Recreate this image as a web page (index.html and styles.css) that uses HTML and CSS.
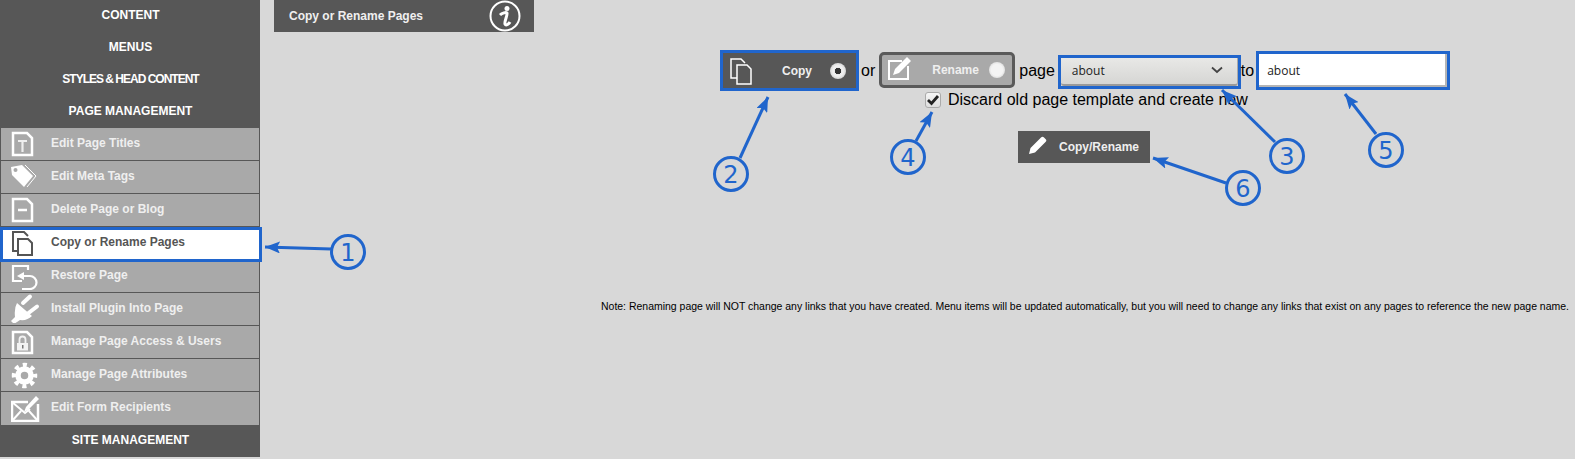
FILE: index.html
```html
<!DOCTYPE html>
<html lang="en">
<head>
<meta charset="UTF-8" />
<title>Copy or Rename Pages</title>
<link rel="stylesheet" href="styles.css">
</head>
<body>

<div class="layout">
  <aside class="sidebar">
    <a class="top-item">CONTENT</a>
    <a class="top-item">MENUS</a>
    <a class="top-item tight">STYLES &amp; HEAD CONTENT</a>
    <a class="top-item">PAGE MANAGEMENT</a>

    <ul class="sub-menu">
      <li class="sub-item">
        <svg class="icon" viewBox="0 0 30 30"><path d="M2 5h14l5 5v17H2z" fill="none" stroke="#fff" stroke-width="2.500"/><path d="M7 13h9M11.500 13v11" fill="none" stroke="#eee" stroke-width="2.200"/></svg>
        Edit Page Titles
      </li>
      <li class="sub-item">
        <svg class="icon" viewBox="0 0 30 30"><path d="M0 6 11 4l11 11-9 11L1 14z" fill="#fff"/><path d="M14 4l11 11-9 11" fill="none" stroke="#fff"/><circle cx="4.500" cy="9" r="2" fill="#a9a9a9"/></svg>
        Edit Meta Tags
      </li>
      <li class="sub-item">
        <svg class="icon" viewBox="0 0 30 30"><path d="M2 5h14l5 5v17H2z" fill="none" stroke="#fff" stroke-width="2.500"/><path d="M7 16h9" fill="none" stroke="#fff" stroke-width="2.500"/></svg>
        Delete Page or Blog
      </li>
      <li class="sub-item active">
        <svg class="icon" viewBox="0 0 30 30"><path d="M6 24H2V5h11l4 4M7 12h10l4 4v12H7z" fill="none" stroke="#555" stroke-width="2"/></svg>
        Copy or Rename Pages
      </li>
      <li class="sub-item">
        <svg class="icon" viewBox="0 0 30 30"><path d="M17 10V6H2v15h9" fill="none" stroke="#fff" stroke-width="2.200"/><path d="M12 16h7a6.500 6.500 0 0 1 0 13h-8" fill="none" stroke="#fff" stroke-width="2.200"/><path d="M6 16l7-4v8z" fill="#fff"/></svg>
        Restore Page
      </li>
      <li class="sub-item">
        <svg class="icon" viewBox="0 0 30 30"><path d="M6 10 21 23Q16 28 9 27L3 31 0 28 4 24Q3 15 6 10z" fill="#fff"/><path d="M12 10l7-6.500M17.500 20l8.500-6.500" fill="none" stroke="#fff" stroke-width="4" stroke-linecap="round"/></svg>
        Install Plugin Into Page
      </li>
      <li class="sub-item">
        <svg class="icon" viewBox="0 0 30 30"><path d="M2 6h14l5 5v16H2z" fill="none" stroke="#fff" stroke-width="2.500"/><rect x="6" y="17" width="11" height="7.500" fill="#f2f2f2"/><path d="M8.500 17v-3.500a3 3 0 0 1 6 0V17" fill="none" stroke="#f2f2f2" stroke-width="1.800"/><rect x="11" y="19" width="1.500" height="3.500" fill="#777"/></svg>
        Manage Page Access &amp; Users
      </li>
      <li class="sub-item">
        <svg class="icon" viewBox="0 0 30 30"><circle cx="13.500" cy="16.500" r="6.500" fill="none" stroke="#fff" stroke-width="5.500"/><circle cx="13.500" cy="16.500" r="10.500" fill="none" stroke="#fff" stroke-width="4.500" stroke-dasharray="4.100 4.147" stroke-dashoffset="2.050"/></svg>
        Manage Page Attributes
      </li>
      <li class="sub-item">
        <svg class="icon" viewBox="0 0 30 30"><path d="M17 10H1v19h26V12" fill="none" stroke="#fff" stroke-width="2.500"/><path d="M1 10l13 11 5-4M1 29l9-10M27 29l-9-10" fill="none" stroke="#fff" stroke-width="2"/><path d="M13 20l2-5L25 4l3 3-11 11z" fill="#fff"/></svg>
        Edit Form Recipients
      </li>
    </ul>

    <a class="top-item">SITE MANAGEMENT</a>
  </aside>

  <main class="content">
    <div class="title-bar">
      <span>Copy or Rename Pages</span>
      <svg class="info-icon" viewBox="0 0 32 32"><circle cx="16" cy="16" r="14.500" fill="none" stroke="#fff" stroke-width="2"/><circle cx="18" cy="8.500" r="2.500" fill="#fff"/><path d="M11 15c2-2 6-3 7-2s-3 9-2 11 4 0 5-2" fill="none" stroke="#fff" stroke-width="3"/></svg>
    </div>

    <div class="copy-form">
      <div class="form-row">
        <div class="mode-btn mode-copy marked">
          <svg class="mode-icon" viewBox="0 0 24 28"><path d="M8 21H2V2h10l4 4M8 8h10l4 4v15H8z" fill="none" stroke="#fff" stroke-width="1.500"/></svg>
          <span class="mode-label">Copy</span>
          <span class="radio on"></span>
        </div>
        <span class="word word-or">or</span>
        <div class="mode-btn mode-rename">
          <svg class="mode-icon" viewBox="0 0 24 28"><path d="M15 5H2v18h19V10" fill="none" stroke="#fff" stroke-width="2"/><path d="M6 19l2-6L20 1l4 4-12 12z" fill="#fff"/></svg>
          <span class="mode-label">Rename</span>
          <span class="radio"></span>
        </div>
        <span class="word word-page">page</span>
        <div class="select-box marked">
          <div class="select-inner">
            <span>about</span>
            <svg class="chevron" viewBox="0 0 12 8"><path d="M1 1.500l5 4.500 5-4.500" fill="none" stroke="#444" stroke-width="1.800"/></svg>
          </div>
        </div>
        <span class="word word-to">to</span>
        <div class="text-box marked"><div class="text-inner">about</div></div>
      </div>

      <div class="discard-row">
        <span class="checkbox"><svg viewBox="0 0 14 14"><path d="M2 7l3.500 3.500L12 3" fill="none" stroke="#222" stroke-width="2.800"/></svg></span>
        <span>Discard old page template and create new</span>
      </div>

      <div class="submit-btn">
        <svg class="submit-icon" viewBox="0 0 20 20"><path d="M1 18l1.500-6L13 1.500a2 2 0 0 1 3 0L17.500 3a2 2 0 0 1 0 3L7 16.500z" fill="#fff"/></svg>
        Copy/Rename
      </div>
    </div>

    <p class="note">Note: Renaming page will NOT change any links that you have created. Menu items will be updated automatically, but you will need to change any links that exist on any pages to reference the new page name.</p>
  </main>
</div>

<!-- numbered callouts drawn on top of the screenshot -->
<svg class="callouts" viewBox="0 0 1575 459">
  <defs>
    <marker id="head" markerUnits="userSpaceOnUse" markerWidth="16" markerHeight="12" refX="15" refY="6" orient="auto">
      <path d="M0 0 15 6 0 12 3 6z" fill="#2065cc"/>
    </marker>
  </defs>
  <g class="arrows">
    <path d="M331 249 265 247" marker-end="url(#head)"/>
    <path d="M740 158 768 97" marker-end="url(#head)"/>
    <path d="M916 141 932 112" marker-end="url(#head)"/>
    <path d="M1275 142 1222 90" marker-end="url(#head)"/>
    <path d="M1376 134 1345 94" marker-end="url(#head)"/>
    <path d="M1226 183 1153 158" marker-end="url(#head)"/>
  </g>
  <g class="rings">
    <circle cx="348" cy="252" r="16.500"/>
    <circle cx="731" cy="174" r="16.500"/>
    <circle cx="1287" cy="156" r="16.500"/>
    <circle cx="908" cy="157" r="16.500"/>
    <circle cx="1386" cy="150" r="16.500"/>
    <circle cx="1243" cy="188" r="16.500"/>
  </g>
  <g class="digits">
    <text x="348" y="261">1</text>
    <text x="731" y="183">2</text>
    <text x="1287" y="165">3</text>
    <text x="908" y="166">4</text>
    <text x="1386" y="159">5</text>
    <text x="1243" y="197">6</text>
  </g>
</svg>

</body>
</html>
```

FILE: styles.css
```css
body {
  margin: 0;
  background: #d8d8d8;
  font-family: "Liberation Sans", Arial, sans-serif;
  color: #000;
  overflow: hidden;
}
.layout {
  display: flex;
  align-items: flex-start;
}

/* sidebar */
.sidebar {
  width: 260px;
  flex: none;
  background: #575757;
}
.top-item {
  display: block;
  box-sizing: border-box;
  height: 32px;
  padding-left: 1px;
  line-height: 30px;
  text-align: center;
  color: #fff;
  font-size: 12px;
  font-weight: bold;
}
.top-item.tight {
  letter-spacing: -1px;
}
.sub-menu {
  list-style: none;
  margin: 0;
  padding: 0;
}
.sub-item {
  display: flex;
  align-items: center;
  box-sizing: border-box;
  height: 33px;
  margin: 0 1px;
  padding-bottom: 2px;
  border-bottom: 1px solid #575757;
  background: #a9a9a9;
  color: #efefef;
  font-size: 12px;
  font-weight: bold;
}
.sub-item:last-child {
  padding-bottom: 3px;
  border-bottom: none;
}
.sub-item .icon {
  width: 30px;
  height: 30px;
  margin: 0 10px;
  flex: none;
}
.sub-item.active {
  position: relative;
  height: 35px;
  margin: 0 -2px -2px 0;
  padding: 0 0 5px 1px;
  border: 3px solid #2065cc;
  background: #fff;
  color: #555;
  z-index: 1;
}
.sub-item.active .icon {
  margin-left: 7px;
}

/* title bar */
.content {
  flex: 1;
  min-width: 0;
}
.title-bar {
  display: flex;
  align-items: center;
  justify-content: space-between;
  width: 245px;
  height: 32px;
  margin-left: 14px;
  padding: 0 0 0 15px;
  background: #575757;
  color: #efefef;
  font-size: 12px;
  font-weight: bold;
}
.info-icon {
  width: 32px;
  height: 32px;
  margin-right: 13px;
}

/* form */
.copy-form {
  margin: 18px 0 0 460px;
}
.form-row {
  display: flex;
  align-items: center;
  height: 41px;
}
.marked {
  border: 3px solid #2065cc;
  box-sizing: border-box;
}
.word {
  font-size: 16px;
  line-height: 18px;
}
.word-or {
  margin: 0 4px 0 2px;
}
.word-page {
  margin: 0 3px 0 4px;
}
.word-to {
  margin: 0 2px 0 0;
}
.mode-btn {
  display: flex;
  align-items: center;
  box-sizing: border-box;
  color: #efefef;
  font-size: 12px;
  font-weight: bold;
}
.mode-copy {
  width: 139px;
  height: 41px;
  background: #575757;
}
.mode-rename {
  width: 136px;
  height: 36px;
  margin-top: -1px;
  border: 3px solid #5a5a5a;
  border-radius: 5px;
  background: #a9a9a9;
}
.mode-icon {
  width: 24px;
  height: 28px;
  flex: none;
}
.mode-copy .mode-icon {
  margin-left: 6px;
}
.mode-rename .mode-icon {
  margin-left: 5px;
}
.mode-label {
  flex: 1;
}
.mode-copy .mode-label {
  margin-left: 29px;
}
.mode-rename .mode-label {
  margin-left: 21px;
}
.radio {
  width: 16px;
  height: 16px;
  flex: none;
  border-radius: 50%;
  background: radial-gradient(circle, #f4f4f4 50%, #c8c8c8 100%);
}
.mode-copy .radio {
  margin-right: 10px;
  background: radial-gradient(circle, #333 0 3px, #e8e8e8 3.500px, #f2f2f2 5px, #b8b8b8 100%);
}
.mode-rename .radio {
  margin-right: 7px;
}
.select-box {
  width: 183px;
  height: 34px;
  margin-top: 3px;
}
.select-inner {
  display: flex;
  align-items: center;
  justify-content: space-between;
  box-sizing: border-box;
  height: 28px;
  padding: 0 14px 2px 11px;
  border-right: 1px solid #aaa;
  border-bottom: 2px solid #9a9a9a;
  border-radius: 0 0 3px 3px;
  background: linear-gradient(#e8e8e6, #d6d6d4);
  font-family: "Open Sans", sans-serif;
  font-size: 12px;
  color: #222;
}
.chevron {
  width: 12px;
  height: 8px;
}
.text-box {
  width: 194px;
  height: 39px;
}
.text-inner {
  box-sizing: border-box;
  height: 33px;
  padding-left: 8px;
  border-right: 2px solid #b5b5b5;
  border-bottom: 2px solid #b5b5b5;
  background: #fff;
  font-family: "Open Sans", sans-serif;
  font-size: 12px;
  line-height: 34px;
  color: #222;
}
.discard-row {
  display: flex;
  align-items: center;
  gap: 7px;
  height: 18px;
  margin: 0 0 0 205px;
  font-size: 16px;
}
.checkbox {
  display: flex;
  align-items: center;
  justify-content: center;
  box-sizing: border-box;
  width: 16px;
  height: 16px;
  border: 1px solid #aaa;
  border-radius: 3px;
  background: linear-gradient(#f6f6f6, #dedede);
}
.checkbox svg {
  width: 14px;
  height: 14px;
}
.submit-btn {
  display: flex;
  align-items: center;
  width: 132px;
  height: 32px;
  margin: 22px 0 0 298px;
  background: #575757;
  color: #efefef;
  font-size: 12px;
  font-weight: bold;
}
.submit-icon {
  width: 20px;
  height: 20px;
  margin: 0 11px 2px 10px;
  flex: none;
}
.note {
  margin: 137px 0 0 341px;
  font-size: 10.470px;
  line-height: 14px;
  white-space: nowrap;
}

/* callouts */
.callouts {
  position: absolute;
  left: 0;
  top: 0;
  width: 1575px;
  height: 459px;
  pointer-events: none;
}
.arrows path {
  fill: none;
  stroke: #2065cc;
  stroke-width: 3;
}
.rings circle {
  fill: #d8d8d8;
  stroke: #2065cc;
  stroke-width: 3;
}
.digits text {
  fill: #2065cc;
  font-family: "DejaVu Sans", sans-serif;
  font-size: 24px;
  text-anchor: middle;
}
```
